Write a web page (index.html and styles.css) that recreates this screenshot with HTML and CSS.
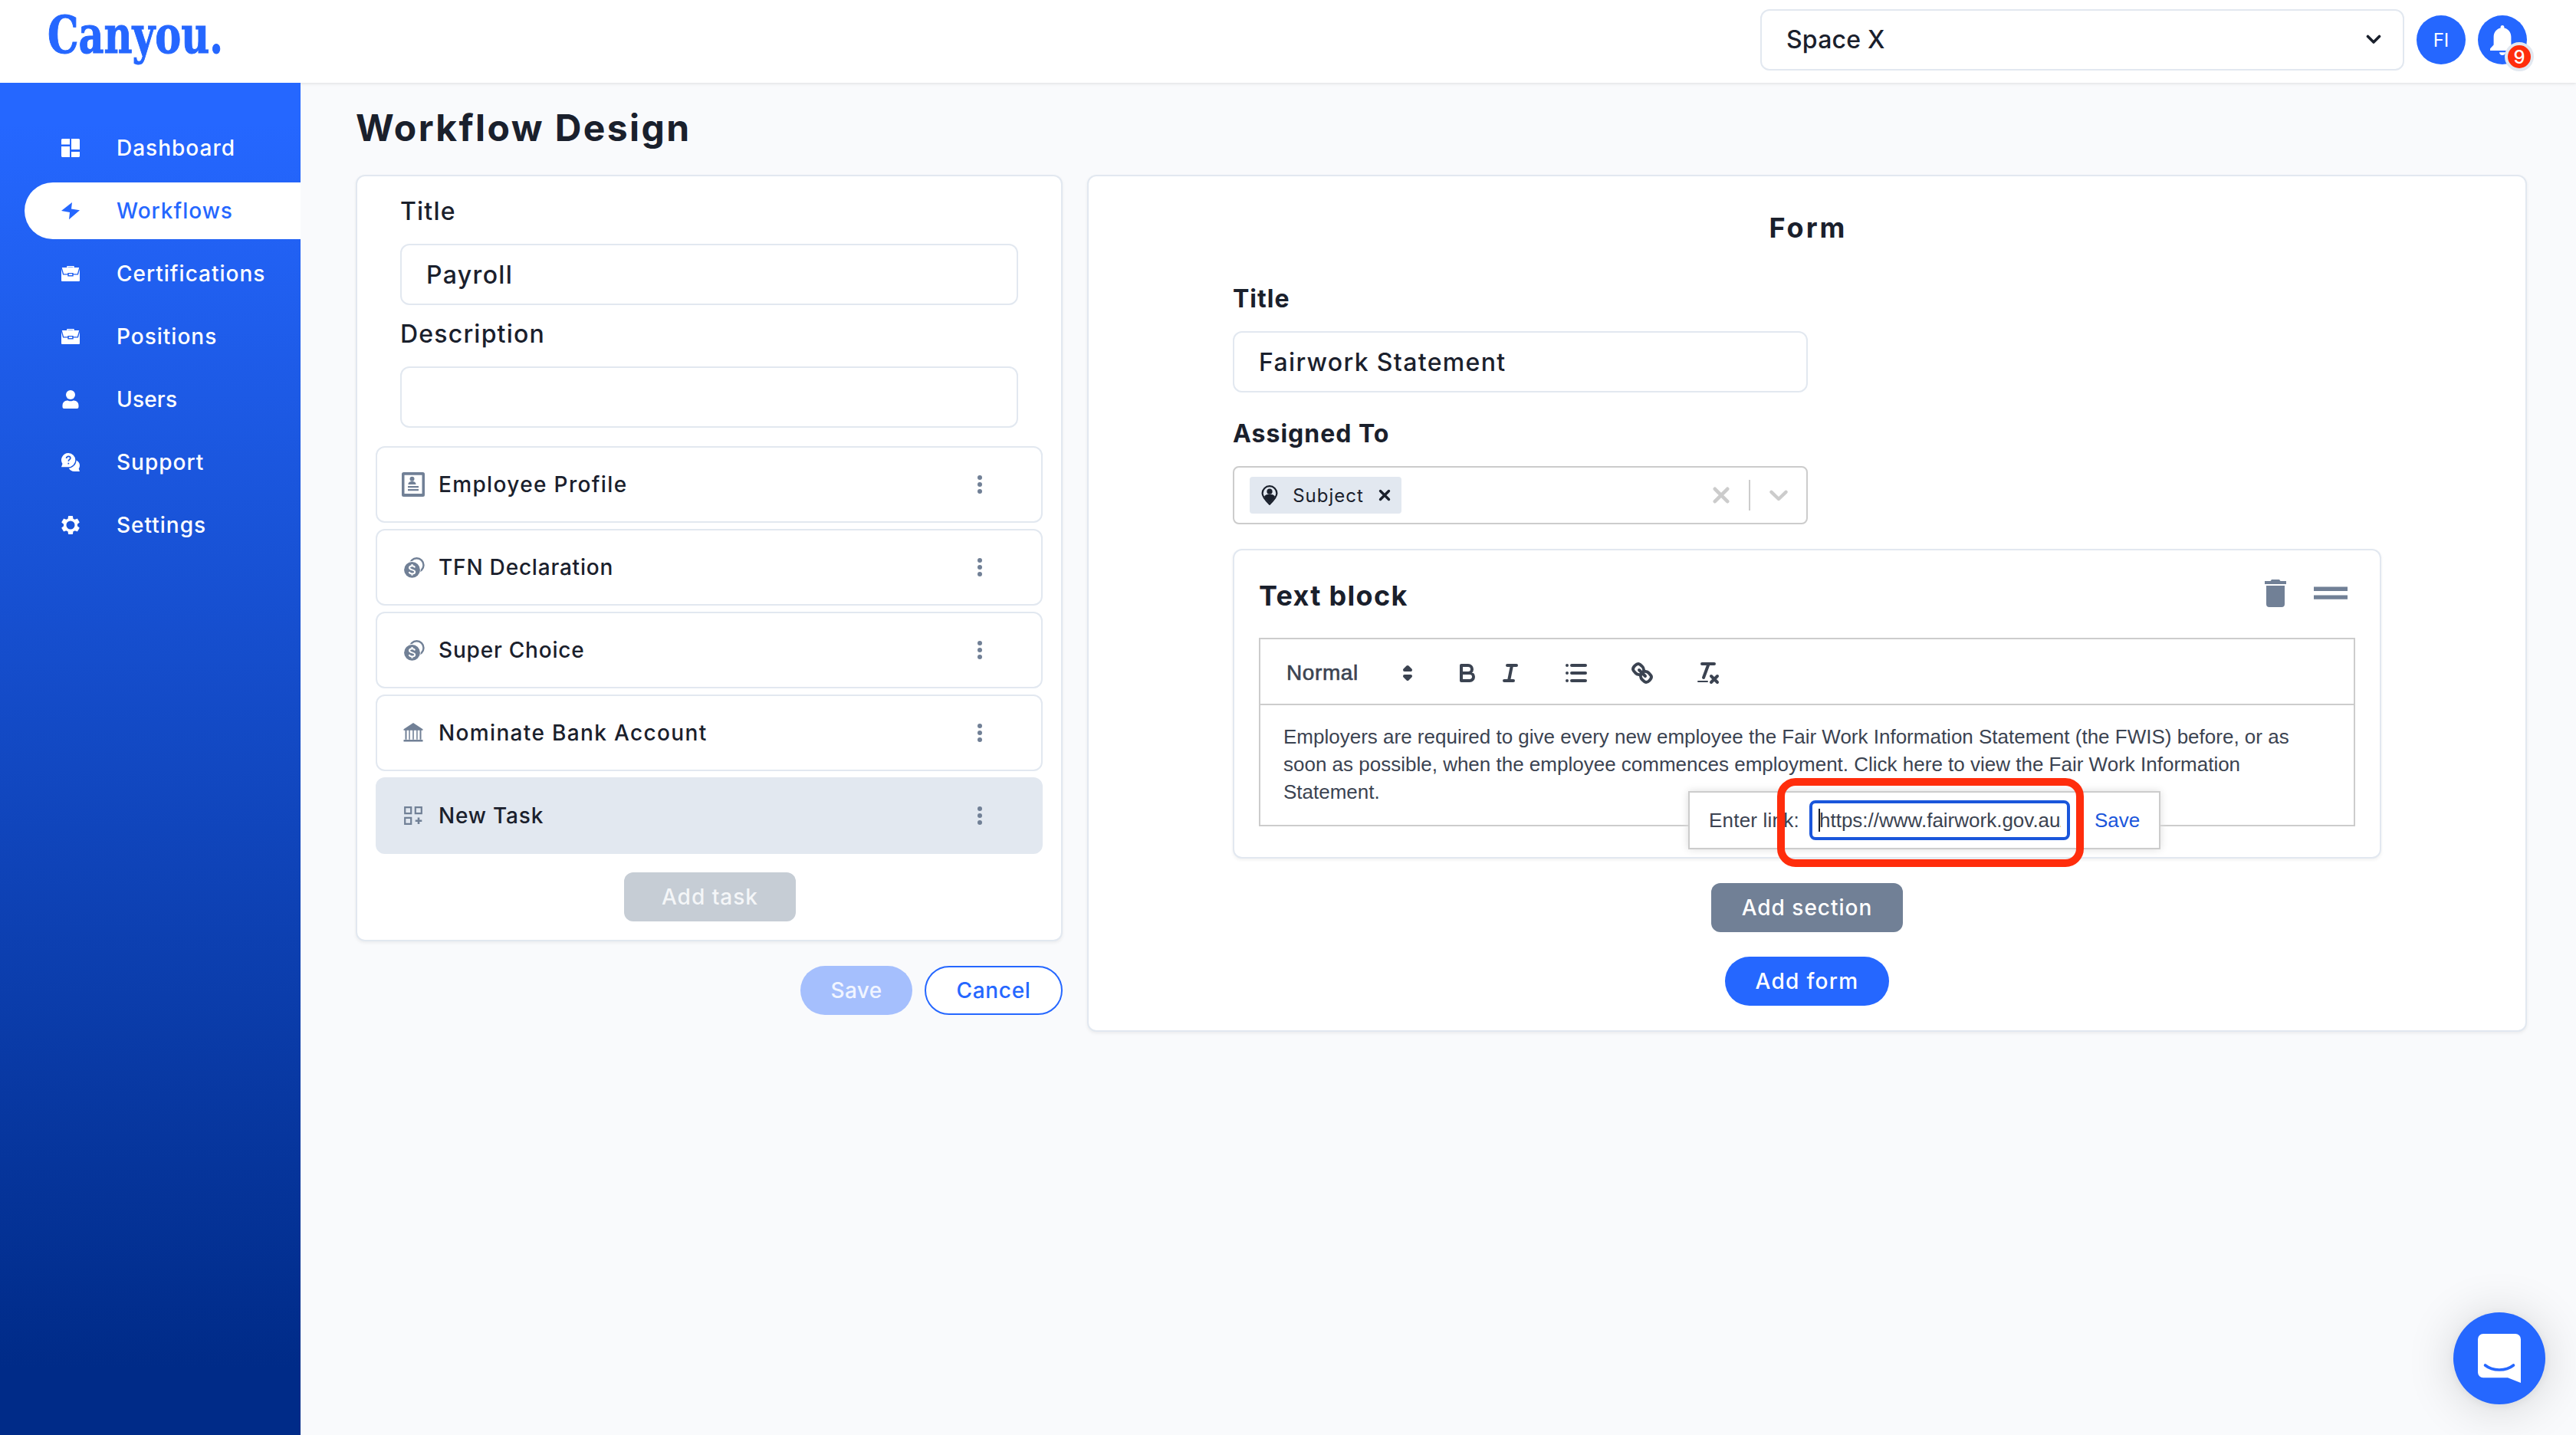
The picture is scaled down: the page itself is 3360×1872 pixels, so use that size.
FILE: index.html
```html
<!DOCTYPE html>
<html lang="en">
<head>
  <meta charset="UTF-8">
  <meta name="viewport" content="width=device-width, initial-scale=1.0">
  <title>Canyou - Workflow Design</title>
  <link rel="stylesheet" href="styles.css">
</head>
<body>
  <!-- shared icons -->
  <svg class="sprite" width="0" height="0">
    <symbol id="briefcase" viewBox="0 0 24 20">
      <path d="M0 4 2 11.6H8.3V13.4H15.7V11.6H22L24 4V19a1 1 0 0 1-1 1H1a1 1 0 0 1-1-1z"/>
      <path d="M.8 2H23.2L20.9 10.2H15.7V9H8.3v1.2H3.1z"/>
      <path d="M9.8 10.2h4.4v1.9H9.8z"/>
      <path d="M8 2.4V.7h8v1.7" fill="none" stroke="currentColor" stroke-width="1.4"/>
    </symbol>
    <symbol id="coins" viewBox="0 0 27 27">
      <circle cx="16.5" cy="10.2" r="9" fill="none" stroke="currentColor" stroke-width="2.4"/>
      <circle cx="10.5" cy="16.2" r="11.2" fill="#fff"/>
      <circle cx="10.5" cy="16.4" r="10.4"/>
      <path d="M14 13.400c-.4-1.400-1.700-2.100-3.500-2.100-2 0-3.500.9-3.500 2.500 0 3.400 7.200 1.700 7.200 5.200 0 1.700-1.600 2.600-3.700 2.600-2 0-3.400-.9-3.800-2.500M10.500 9v2.300M10.500 21.500v2.300" fill="none" stroke="#fff" stroke-width="2"/>
    </symbol>
    <symbol id="dots" viewBox="0 0 8 24">
      <circle cx="4" cy="3" r="3"/><circle cx="4" cy="12" r="3"/><circle cx="4" cy="21" r="3"/>
    </symbol>
  </svg>

  <header class="header">
    <div class="logo">Canyou.</div>
    <div class="header-right">
      <div class="select">
        <span>Space X</span>
        <svg width="20" height="13" viewBox="0 0 20 13"><path d="M2.5 2.5 10 10 17.5 2.5" fill="none" stroke="#1a202c" stroke-width="3.6" stroke-linecap="round" stroke-linejoin="round"/></svg>
      </div>
      <div class="avatar">FI</div>
      <div class="avatar bell">
        <svg width="32" height="40" viewBox="0 0 32 40" fill="#fff"><path d="M16 1c1.5 0 2.4 1 2.4 2.4v1.2c5.4 1.2 9 5.8 9 11.6v10.3l4.6 5V34H0v-2.5l4.6-5V16.200c0-5.800 3.600-10.400 9-11.600V3.400C13.600 2 14.500 1 16 1zM12 36.200h8c0 2.400-1.800 3.800-4 3.800s-4-1.400-4-3.800z"/></svg>
        <span class="badge">9</span>
      </div>
    </div>
  </header>

  <div class="page">
    <nav class="sidebar">
      <a class="nav-item">
        <svg width="24" height="24" viewBox="0 0 24 24"><path d="M1 0h10v7.500H0V1zM0 10h11v14H1l-1-1zM13 0h10l1 1v13H13zM13 17h11v6l-1 1H13z"/></svg>
        Dashboard
      </a>
      <a class="nav-item active">
        <svg width="24" height="24" viewBox="0 0 24 24"><path d="M14 1 0 12l11 2L10 23.200 24 11.200 13 9.600z"/></svg>
        Workflows
      </a>
      <a class="nav-item">
        <svg width="24" height="20"><use href="#briefcase"/></svg>
        Certifications
      </a>
      <a class="nav-item">
        <svg width="24" height="20"><use href="#briefcase"/></svg>
        Positions
      </a>
      <a class="nav-item users">
        <svg width="24" height="24" viewBox="0 0 24 24"><circle cx="12" cy="6" r="6"/><path d="M1.500 22v-2.500a6 6 0 0 1 6-6c1.500 0 2.500.8 4.500.8s3-.8 4.500-.8a6 6 0 0 1 6 6V22a2 2 0 0 1-2 2h-17a2 2 0 0 1-2-2z"/></svg>
        Users
      </a>
      <a class="nav-item">
        <svg width="24" height="24" viewBox="0 0 24 24">
          <path d="M19.600 9.500C22.200 10.900 24 13.200 24 16c0 1.800-.5 3.300-1.300 4.600L24 24h-7c-3.300 0-6-1.800-7.200-4.300C15 19.300 19.400 15.300 19.600 9.500z"/>
          <path d="M9.200 0a9.100 9.100 0 1 1 0 18.200H0L1.500 14A9.100 9.100 0 0 1 9.200 0z"/>
          <path d="M6.600 6.900c0-1.600 1.200-2.500 2.600-2.500s2.600.9 2.600 2.300c0 1.700-2.500 1.900-2.500 4M9.300 12.700v1.800" fill="none" stroke="#1b55dc" stroke-width="1.700"/>
        </svg>
        Support
      </a>
      <a class="nav-item">
        <svg width="24" height="24" viewBox="2 2 20 20"><path fill-rule="evenodd" d="M19.430 12.980c.04-.32.07-.64.07-.98s-.03-.66-.07-.98l2.110-1.650c.19-.15.24-.42.12-.64l-2-3.460c-.12-.22-.39-.3-.61-.22l-2.490 1c-.52-.4-1.080-.73-1.690-.98l-.38-2.650C14.460 2.180 14.250 2 14 2h-4c-.25 0-.46.18-.49.42l-.38 2.650c-.61.25-1.170.59-1.690.98l-2.490-1c-.23-.09-.49 0-.61.22l-2 3.460c-.13.22-.07.49.12.64l2.110 1.650c-.04.32-.07.65-.07.98s.03.66.07.98l-2.110 1.650c-.19.15-.24.42-.12.64l2 3.460c.12.22.39.3.61.22l2.490-1c.52.4 1.080.73 1.690.98l.38 2.650c.03.24.24.42.49.42h4c.25 0 .46-.18.49-.42l.38-2.650c.61-.25 1.170-.59 1.690-.98l2.490 1c.23.09.49 0 .61-.22l2-3.460c.12-.22.07-.49-.12-.64zM12 16.600a4.600 4.600 0 1 1 0-9.200 4.600 4.600 0 0 1 0 9.200z"/></svg>
        Settings
      </a>
    </nav>

    <main class="main">
      <h1>Workflow Design</h1>

      <div class="columns">
        <section class="left">
          <div class="card workflow">
            <div class="field">
              <label>Title</label>
              <div class="input">Payroll</div>
            </div>
            <div class="field">
              <label>Description</label>
              <div class="input"></div>
            </div>

            <div class="tasks">
              <div class="task">
                <div class="task-icon"><svg width="30" height="32" viewBox="0 0 30 32"><path fill-rule="evenodd" d="M2.500 0h25A2.500 2.500 0 0 1 30 2.500v27a2.500 2.500 0 0 1-2.500 2.500h-25A2.500 2.500 0 0 1 0 29.500v-27A2.500 2.500 0 0 1 2.500 0zM3.500 3.700V28h23V3.700z"/><circle cx="13.500" cy="8.800" r="3"/><path d="M8.500 16c0-3 2-4 5-4s5 1 5 4zM8 18h14v2.200H8zM8 22h14v2.200H8z"/></svg></div>
                <span>Employee Profile</span>
                <svg class="dots" width="8" height="24"><use href="#dots"/></svg>
              </div>
              <div class="task tight">
                <div class="task-icon coins"><svg width="27" height="27"><use href="#coins"/></svg></div>
                <span>TFN Declaration</span>
                <svg class="dots" width="8" height="24"><use href="#dots"/></svg>
              </div>
              <div class="task tight">
                <div class="task-icon coins"><svg width="27" height="27"><use href="#coins"/></svg></div>
                <span>Super Choice</span>
                <svg class="dots" width="8" height="24"><use href="#dots"/></svg>
              </div>
              <div class="task">
                <div class="task-icon"><svg width="26" height="26" viewBox="0 0 26 26"><path d="M13 0 25.500 8.200v1.600H.5V8.200zM2.500 9.800h2v12h-2zM7.300 9.800h1.500v12H7.300zM12.200 9.800h1.600v12h-1.600zM17.200 9.800h1.500v12h-1.500zM21.500 9.800h2v12h-2zM.5 22h25v2.600H.5z"/></svg></div>
                <span>Nominate Bank Account</span>
                <svg class="dots" width="8" height="24"><use href="#dots"/></svg>
              </div>
              <div class="task tight selected">
                <div class="task-icon"><svg width="24" height="24" viewBox="0 0 24 24"><path d="M1.200 1.200h8v8h-8zM14.800 1.200h8v8h-8zM1.200 14.800h8v8h-8z" fill="none" stroke="currentColor" stroke-width="2.200"/><path d="M17.700 14.500h2.600v3h3v2.600h-3v3h-2.600v-3h-3v-2.600h3z"/></svg></div>
                <span>New Task</span>
                <svg class="dots" width="8" height="24"><use href="#dots"/></svg>
              </div>
            </div>

            <button class="btn btn-gray btn-add-task" disabled>Add task</button>
          </div>

          <div class="actions">
            <button class="btn btn-pill btn-save" disabled>Save</button>
            <button class="btn btn-pill btn-cancel">Cancel</button>
          </div>
        </section>

        <section class="card form">
          <h2>Form</h2>

          <div class="form-body">
            <label>Title</label>
            <div class="input">Fairwork Statement</div>

            <label class="assigned">Assigned To</label>
            <div class="multi-select">
              <div class="chip">
                <svg width="22" height="26" viewBox="0 0 22 26"><path d="M11 1.200a9.400 9.400 0 0 0-9.400 9.400c0 5 4.900 9.700 9.400 14.200 4.500-4.500 9.400-9.200 9.400-14.200A9.400 9.400 0 0 0 11 1.200z" fill="none" stroke="#1a202c" stroke-width="2.200"/><circle cx="11" cy="8.200" r="3.600"/><path d="M4 14.500c1.500-2 4-2.700 7-2.700s5.500.7 7 2.700c-1.200 3.300-4 6-7 9-3-3-5.800-5.700-7-9z"/></svg>
                <span>Subject</span>
                <svg width="16" height="16" viewBox="0 0 16 16"><path d="M2.500 2.500l11 11M13.500 2.500l-11 11" stroke="#1a202c" stroke-width="3.400" stroke-linecap="round"/></svg>
              </div>
              <div class="indicators">
                <svg width="22" height="22" viewBox="0 0 22 22"><path d="M2.800 2.800l16.400 16.400M19.200 2.800 2.800 19.200" stroke="#ccc" stroke-width="4.600" stroke-linecap="round"/></svg>
                <span class="separator"></span>
                <svg width="24" height="15" viewBox="0 0 24 15"><path d="M2.500 2.800 12 12l9.500-9.200" fill="none" stroke="#ccc" stroke-width="4.400" stroke-linecap="round" stroke-linejoin="round"/></svg>
              </div>
            </div>

            <div class="card block">
              <div class="block-head">
                <h2>Text block</h2>
                <div class="block-tools">
                  <svg width="28" height="36" viewBox="0 0 28 36"><path d="M2 8h24v24a4 4 0 0 1-4 4H6a4 4 0 0 1-4-4zM0 2h7.500L9 0h10l1.500 2H28v4H0z"/></svg>
                  <svg width="44" height="18" viewBox="0 0 44 18"><path d="M0 .6h44v5.400H0zM0 11.400h44v5.400H0z"/></svg>
                </div>
              </div>

              <div class="editor">
                <div class="toolbar">
                  <div class="picker">
                    <span>Normal</span>
                    <svg width="36" height="36" viewBox="0 0 18 18"><path class="fill-line" d="M7 11l2 2 2-2zM7 7l2-2 2 2z"/></svg>
                  </div>
                  <svg class="tool-bold" width="36" height="36" viewBox="0 0 18 18"><path d="M5,4H9.500A2.500,2.500,0,0,1,12,6.500v0A2.500,2.500,0,0,1,9.500,9H5zM5,9h5.500A2.500,2.500,0,0,1,13,11.500v0A2.500,2.500,0,0,1,10.500,14H5z"/></svg>
                  <svg class="tool-italic" width="36" height="36" viewBox="0 0 18 18"><path d="M7 4h6M5 14h6M8 14l2-10"/></svg>
                  <svg class="tool-list" width="36" height="36" viewBox="0 0 18 18"><path d="M6 4h9M6 9h9M6 14h9M3 4h0M3 9h0M3 14h0"/></svg>
                  <svg class="tool-link" width="36" height="36" viewBox="0 0 18 18"><path d="M7 7l4 4M8.900,4.577a3.476,3.476,0,0,1,.36,4.679A3.476,3.476,0,0,1,4.577,8.900C3.185,7.500,2.035,6.400,4.217,4.217S7.500,3.185,8.900,4.577ZM13.423,9.100a3.476,3.476,0,0,0-4.679-.36,3.476,3.476,0,0,0,.36,4.679c1.392,1.392,2.500,2.542,4.679.36S14.815,10.500,13.423,9.100Z"/></svg>
                  <svg class="tool-clean" width="36" height="36" viewBox="0 0 18 18"><path d="M5 3h8M6 12 9.350 3M11 11l4 4M15 11l-4 4"/><rect class="solid" x="2" y="14" width="7" height="1" rx=".5"/></svg>
                </div>
                <p class="editor-text">Employers are required to give every new employee the Fair Work Information Statement (the FWIS) before, or as soon as possible, when the employee commences employment. Click here to view the Fair Work Information Statement.</p>

                <div class="link-tooltip">
                  <span class="link-label">Enter link:</span>
                  <div class="link-input"><span class="caret"></span><span class="link-value">https://www.fairwork.gov.au/</span></div>
                  <a class="link-save">Save</a>
                  <div class="highlight"></div>
                </div>
              </div>
            </div>
          </div>

          <button class="btn btn-gray btn-add-section">Add section</button>
          <button class="btn btn-pill btn-add-form">Add form</button>
        </section>
      </div>
    </main>
  </div>

  <div class="chat">
    <svg width="56" height="64" viewBox="0 0 56 64"><path d="M7 0h42a7 7 0 0 1 7 7v57L39 57.300H7a7 7 0 0 1-7-7V7a7 7 0 0 1 7-7z" fill="#fff"/><path d="M9.500 41c10 8 27 8 37 0" fill="none" stroke="#2567ff" stroke-width="3.600" stroke-linecap="round"/></svg>
  </div>
</body>
</html>
```
FILE: styles.css
```css
* {
  margin: 0;
  padding: 0;
  box-sizing: border-box;
}

body {
  width: 3360px;
  height: 1872px;
  display: flex;
  flex-direction: column;
  overflow: hidden;
  position: relative;
  font-family: "Inter", sans-serif;
  font-size: 28px;
  font-weight: 500;
  letter-spacing: 1px;
  color: #1a202c;
  background: #f9fafc;
}

svg {
  display: block;
  flex-shrink: 0;
  fill: currentColor;
}

.sprite {
  position: absolute;
}

/* Header */
.header {
  flex: 0 0 108px;
  display: flex;
  align-items: center;
  justify-content: space-between;
  padding: 0 64px 4px 62px;
  background: #fff;
  box-shadow: 0 1px 4px rgba(0, 0, 0, 0.12);
}

.logo {
  font-family: "DejaVu Serif Condensed", "DejaVu Serif", serif;
  font-stretch: condensed;
  font-size: 67px;
  font-weight: 700;
  line-height: 80px;
  letter-spacing: 0;
  color: #2567ff;
  transform: scaleX(0.845);
  transform-origin: left;
  margin-bottom: 12px;
  -webkit-text-stroke: 1px #2567ff;
}

.header-right {
  display: flex;
  align-items: center;
  gap: 16px;
}

.select {
  width: 840px;
  height: 80px;
  display: flex;
  align-items: center;
  justify-content: space-between;
  padding: 0 28px 2px 32px;
  border: 2px solid #e2e8f0;
  border-radius: 12px;
  font-size: 32px;
  letter-spacing: 0.2px;
}

.avatar {
  position: relative;
  width: 64px;
  height: 64px;
  display: flex;
  align-items: center;
  justify-content: center;
  border-radius: 50%;
  background: #2567ff;
  color: #fff;
  font-size: 24px;
  font-weight: 400;
  letter-spacing: 0;
}

.badge {
  position: absolute;
  left: 35px;
  top: 35px;
  width: 38px;
  height: 38px;
  border: 4px solid #e2e8f0;
  border-radius: 50%;
  background: #ff2d0c;
  font-size: 24px;
  font-weight: 500;
  line-height: 31px;
  text-align: center;
}

/* Layout */
.page {
  flex: 1;
  display: flex;
}

.sidebar {
  flex: 0 0 392px;
  display: flex;
  flex-direction: column;
  gap: 8px;
  padding: 48px 0 0 32px;
  background: linear-gradient(180deg, #2567ff 3%, #002b88 95%);
  color: #fff;
  position: relative;
}

.nav-item {
  height: 74px;
  display: flex;
  align-items: center;
  gap: 48px;
  padding: 0 0 1px 48px;
  border-radius: 37px 0 0 37px;
}

.nav-item.active {
  background: #fff;
  color: #2567ff;
}

.nav-item.users {
  letter-spacing: 0.2px;
}

.main {
  flex: 1;
  padding: 23px 64px 0 72px;
}

h1 {
  font-size: 48px;
  font-weight: 700;
  line-height: 72px;
  letter-spacing: 2.4px;
  margin-bottom: 25px;
}

h2 {
  font-size: 36px;
  font-weight: 700;
  line-height: 54px;
  letter-spacing: 1.3px;
}

.columns {
  display: flex;
  align-items: flex-start;
  gap: 32px;
}

.card {
  background: #fff;
  border: 2px solid #e2e8f0;
  border-radius: 12px;
  box-shadow: 0 2px 4px rgba(0, 0, 0, 0.06);
}

label {
  display: block;
  font-size: 32px;
  line-height: 48px;
  letter-spacing: 1.2px;
  margin-bottom: 18px;
}

.input {
  height: 80px;
  display: flex;
  align-items: center;
  padding: 0 32px;
  border: 2px solid #e2e8f0;
  border-radius: 12px;
  font-size: 32px;
  letter-spacing: 1.35px;
}

/* Workflow card */
.left {
  width: 922px;
}

.workflow {
  display: flex;
  flex-direction: column;
  padding: 22px 24px 24px;
}

.field {
  margin: 0 32px 14px;
}

.tasks {
  display: flex;
  flex-direction: column;
  gap: 8px;
  margin: 10px 0 24px;
}

.task {
  height: 100px;
  display: flex;
  align-items: center;
  padding: 0 76px 0 32px;
  border: 2px solid #e2e8f0;
  border-radius: 12px;
  letter-spacing: 1.35px;
}

.task.tight {
  letter-spacing: 0.8px;
}

.task.selected {
  background: #e2e8f0;
}

.task-icon {
  width: 30px;
  margin-right: 18px;
  display: flex;
  justify-content: center;
  color: #718096;
}

.task-icon.coins {
  padding-left: 3px;
}

.dots {
  margin-left: auto;
  color: #718096;
}

.btn {
  height: 64px;
  border: none;
  border-radius: 12px;
  font: inherit;
  letter-spacing: 1px;
  color: #fff;
  align-self: center;
}

.btn-gray {
  background: #718096;
}

.btn-pill {
  border-radius: 32px;
  background: #2567ff;
}

.btn-add-task {
  width: 224px;
  margin-left: 2px;
  background: #c6cdd5;
  color: #f4f6f8;
}

.actions {
  display: flex;
  justify-content: flex-end;
  gap: 16px;
  margin-top: 32px;
}

.btn-save {
  width: 146px;
  background: #a5bffd;
  color: #f1f5ff;
  letter-spacing: 0.4px;
}

.btn-cancel {
  width: 180px;
  border: 2px solid #2567ff;
  background: #fff;
  color: #2567ff;
  letter-spacing: 0.7px;
}

/* Form card */
.form {
  flex: 1;
  display: flex;
  flex-direction: column;
  padding: 40px 0 32px;
}

.form > h2 {
  padding-left: 3px;
  text-align: center;
  letter-spacing: 3px;
}

.form-body {
  width: 1498px;
  margin: 42px auto 32px;
}

.form-body label {
  font-weight: 700;
  letter-spacing: 1px;
}

.form-body .input {
  width: 750px;
}

.form-body .assigned {
  margin-top: 30px;
}

.multi-select {
  width: 750px;
  height: 76px;
  display: flex;
  align-items: center;
  justify-content: space-between;
  padding: 0 24px 0 20px;
  border: 2px solid #ccc;
  border-radius: 8px;
}

.chip {
  width: 198px;
  height: 48px;
  display: flex;
  align-items: center;
  justify-content: space-between;
  padding: 0 14px 0 15px;
  border-radius: 4px;
  background: #e2e8f0;
  font-size: 24px;
  font-weight: 400;
}

.indicators {
  display: flex;
  align-items: center;
  gap: 25px;
}

.separator {
  width: 2px;
  height: 40px;
  background: #ccc;
}

.block {
  margin-top: 32px;
  padding: 32px 32px 40px;
}

.block-head {
  display: flex;
  justify-content: space-between;
  margin-bottom: 28px;
}

.block-tools {
  display: flex;
  align-items: center;
  gap: 36px;
  padding: 0 10px 6px 0;
  color: #718096;
}

/* Editor */
.editor {
  position: relative;
  height: 246px;
  border: 2px solid #ccc;
  font-family: "Liberation Sans", Arial, sans-serif;
  font-size: 26px;
  font-weight: 400;
  letter-spacing: 0;
  color: #3b4351;
}

.toolbar {
  height: 86px;
  display: flex;
  align-items: center;
  padding: 4px 0 0 34px;
  border-bottom: 2px solid #ccc;
}

.toolbar svg {
  fill: none;
  stroke: currentColor;
  stroke-width: 2;
  stroke-linecap: round;
  stroke-linejoin: round;
}

.toolbar .fill-line,
.toolbar .solid {
  fill: currentColor;
}

.toolbar .solid {
  stroke: none;
}

.toolbar .fill-line {
  stroke-width: 2;
}

.picker {
  width: 176px;
  display: flex;
  align-items: center;
  justify-content: space-between;
  font-size: 28px;
  letter-spacing: 0.6px;
  -webkit-text-stroke: 0.6px currentColor;
}

.tool-bold {
  margin-left: 42px;
}

.tool-italic {
  margin-left: 20px;
}

.tool-list {
  margin-left: 50px;
}

.tool-link,
.tool-clean {
  margin-left: 50px;
}

.editor-text {
  padding: 23px 30px 0;
  line-height: 36px;
}

.link-tooltip {
  position: absolute;
  left: 558px;
  top: 198px;
  width: 616px;
  height: 76px;
  display: flex;
  align-items: center;
  padding-left: 25px;
  border: 2px solid #ccc;
  background: #fff;
  box-shadow: 0 0 10px #ddd;
}

.link-label {
  width: 131px;
  letter-spacing: 0.2px;
}

.link-input {
  width: 340px;
  height: 52px;
  display: flex;
  align-items: center;
  padding: 0 8px;
  border: 4px solid #1a56db;
  border-radius: 8px;
}

.caret {
  flex: 0 0 2px;
  height: 30px;
  margin-right: -1px;
  background: #1a202c;
}

.link-value {
  overflow: hidden;
  white-space: nowrap;
}

.link-save {
  margin-left: 32px;
  color: #1a56db;
}

/* Callout round the link field */
.highlight {
  position: absolute;
  left: 114px;
  top: -19px;
  width: 400px;
  height: 116px;
  border: 10px solid #ff2d0c;
  border-radius: 24px;
}

.btn-add-section {
  width: 250px;
  margin-bottom: 32px;
}

.btn-add-form {
  width: 214px;
  letter-spacing: 1.3px;
}

/* Chat launcher */
.chat {
  position: absolute;
  right: 40px;
  bottom: 40px;
  width: 120px;
  height: 120px;
  display: flex;
  align-items: center;
  justify-content: center;
  border-radius: 50%;
  background: #2567ff;
  box-shadow: 0 2px 12px rgba(0, 0, 0, 0.06), 0 4px 64px rgba(0, 0, 0, 0.16);
}
```
